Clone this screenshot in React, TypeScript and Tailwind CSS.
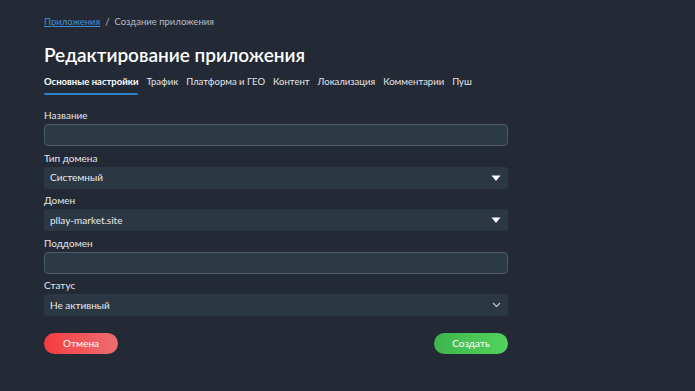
import React from "react";

const tabs = ["Трафик", "Платформа и ГЕО", "Контент", "Локализация", "Комментарии", "Пуш"];

const Label = ({ children }: { children: React.ReactNode }) => (
  <p className="text-[10px] leading-[12px] text-[#e4e6e9] mb-[3px]">{children}</p>
);

const TextInput = () => (
  <div className="h-[22px] w-full rounded-[4px] border border-[#4f5a66] bg-[#2c3a46]" />
);

const Select = ({ value, chevron }: { value: string; chevron?: boolean }) => (
  <div className="h-[22px] w-full rounded-[3px] bg-[#2b3843] flex items-center justify-between pl-[6px] pr-[7px]">
    <span className="text-[10px] text-[#e9ebed]">{value}</span>
    {chevron ? (
      <svg width="9" height="6" viewBox="0 0 9 6" fill="none">
        <path d="M1 1l3.5 3.5L8 1" stroke="#c5cad0" strokeWidth="1.1" />
      </svg>
    ) : (
      <svg width="10" height="6" viewBox="0 0 10 6">
        <path d="M0.5 0.5h9L5.6 5.3a0.8 0.8 0 0 1-1.2 0z" fill="#ffffff" />
      </svg>
    )}
  </div>
);

const App = () => {
  return (
    <div
      className="w-[695px] h-[391px] bg-[#232a36] overflow-hidden"
      style={{ fontFamily: 'Lato, "Noto Sans", sans-serif' }}
    >
      <div className="w-[464px] ml-[44px] pt-[15px]">
        <div className="flex items-center gap-[5px] text-[9.5px] leading-[14px]">
          <span className="text-[#3b8fdb] underline">Приложения</span>
          <span className="text-[#b9bdc3]">/</span>
          <span className="text-[#b9bdc3]">Создание приложения</span>
        </div>

        <h1 className="mt-[14px] text-[19px] leading-[24px] font-semibold text-white">
          Редактирование приложения
        </h1>

        <div className="mt-[8px] flex items-start gap-[8px] text-[9.5px] leading-[14px] text-[#e2e4e7]">
          <div className="flex flex-col">
            <span className="font-bold text-white">Основные настройки</span>
            <div className="mt-[4px] h-[2px] bg-[#2f7fc9] rounded-full" />
          </div>
          {tabs.map((t) => (
            <span key={t}>{t}</span>
          ))}
        </div>

        <div className="mt-[14px] flex flex-col gap-[5.5px]">
          <div>
            <Label>Название</Label>
            <TextInput />
          </div>
          <div>
            <Label>Тип домена</Label>
            <Select value="Системный" />
          </div>
          <div>
            <Label>Домен</Label>
            <Select value="pllay-market.site" />
          </div>
          <div>
            <Label>Поддомен</Label>
            <TextInput />
          </div>
          <div>
            <Label>Статус</Label>
            <Select value="Не активный" chevron />
          </div>
        </div>

        <div className="mt-[17px] flex justify-between">
          <button className="w-[74px] h-[21px] rounded-full bg-gradient-to-r from-[#f53b40] to-[#ec6c72] text-[10px] text-white">
            Отмена
          </button>
          <button className="w-[74px] h-[21px] rounded-full bg-gradient-to-r from-[#3fb54c] to-[#52d35d] text-[10px] text-white">
            Создать
          </button>
        </div>
      </div>
    </div>
  );
};

export default App;
